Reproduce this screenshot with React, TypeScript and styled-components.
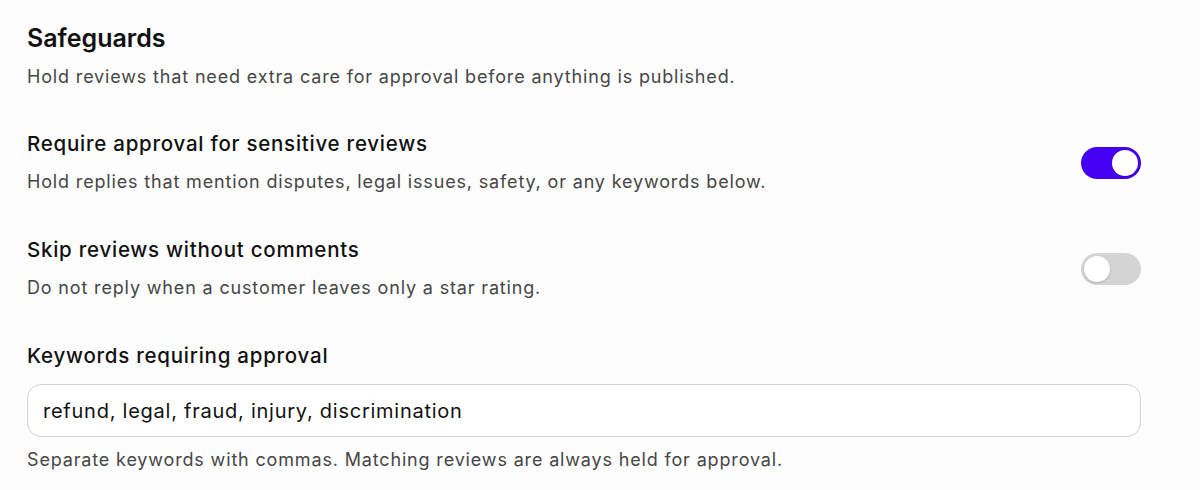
import React from "react";
import styled, { createGlobalStyle } from "styled-components";

const Global = createGlobalStyle`
  html, body { margin: 0; padding: 0; background: #fdfdfd; }
  body { font-family: Inter, "Noto Sans", "Liberation Sans", sans-serif; -webkit-font-smoothing: antialiased; }
`;

const Page = styled.div`
  width: 1200px;
  height: 490px;
  box-sizing: border-box;
  padding: 22px 59px 0 27px;
  display: flex;
  flex-direction: column;
`;

const Title = styled.h2`
  margin: 0;
  font-size: 25px;
  line-height: 32px;
  font-weight: 600;
  color: #111;
`;

const Desc = styled.p<{ $top: number }>`
  margin: ${(p) => p.$top}px 0 0;
  font-size: 18px;
  line-height: 26px;
  letter-spacing: 0.84px;
  color: #464646;
`;

const Row = styled.div<{ $top: number }>`
  margin-top: ${(p) => p.$top}px;
  display: flex;
  align-items: center;
  justify-content: space-between;
`;

const RowText = styled.div`
  display: flex;
  flex-direction: column;
`;

const Label = styled.div`
  font-size: 20.5px;
  line-height: 26px;
  font-weight: 500;
  letter-spacing: 0.75px;
  color: #111;
`;

const Switch = styled.button<{ $on: boolean }>`
  width: 60px;
  height: 32px;
  border-radius: 16px;
  border: none;
  padding: 3px;
  box-sizing: border-box;
  display: flex;
  justify-content: ${(p) => (p.$on ? "flex-end" : "flex-start")};
  background: ${(p) => (p.$on ? "#4500f2" : "#d4d4d4")};
  cursor: pointer;
`;

const Knob = styled.span`
  width: 26px;
  height: 26px;
  border-radius: 50%;
  background: #fff;
  box-shadow: 0 1px 2px rgba(0, 0, 0, 0.18);
`;

const Field = styled.div`
  margin-top: 42px;
  display: flex;
  flex-direction: column;
`;

const Input = styled.input`
  margin-top: 15px;
  height: 53px;
  box-sizing: border-box;
  border: 1.5px solid #d2d2d2;
  border-radius: 14px;
  padding: 0 15px;
  font-family: inherit;
  font-size: 20px;
  letter-spacing: 0.75px;
  color: #111;
  background: #fff;
  outline: none;
`;

export default function App() {
  return (
    <>
      <Global />
      <Page>
        <Title>Safeguards</Title>
        <Desc $top={10}>Hold reviews that need extra care for approval before anything is published.</Desc>
        <Row $top={41}>
          <RowText>
            <Label>Require approval for sensitive reviews</Label>
            <Desc $top={12}>Hold replies that mention disputes, legal issues, safety, or any keywords below.</Desc>
          </RowText>
          <Switch $on={true} aria-label="Require approval for sensitive reviews">
            <Knob />
          </Switch>
        </Row>
        <Row $top={42}>
          <RowText>
            <Label>Skip reviews without comments</Label>
            <Desc $top={12}>Do not reply when a customer leaves only a star rating.</Desc>
          </RowText>
          <Switch $on={false} aria-label="Skip reviews without comments">
            <Knob />
          </Switch>
        </Row>
        <Field>
          <Label>Keywords requiring approval</Label>
          <Input defaultValue="refund, legal, fraud, injury, discrimination" />
          <Desc $top={10}>Separate keywords with commas. Matching reviews are always held for approval.</Desc>
        </Field>
      </Page>
    </>
  );
}
